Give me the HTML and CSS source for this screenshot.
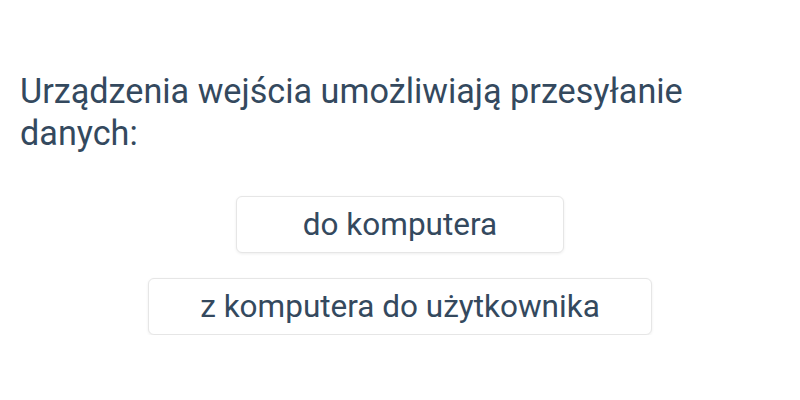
FILE: index.html
```html
<!DOCTYPE html>
<html lang="pl">
<head>
    <meta charset="UTF-8">
    <title>Pytanie</title>
    <link rel="stylesheet" href="styles.css">
</head>
<body>

<div class="question">
    <p class="prompt">Urządzenia wejścia umożliwiają przesyłanie danych:</p>
    <div class="answers">
        <button class="answer answer-short">do komputera</button>
        <button class="answer">z komputera do użytkownika</button>
    </div>
</div>

</body>
</html>
```
FILE: styles.css
```css
body {
    font-family: Roboto, "Noto Sans", Arial, sans-serif;
    margin: 0;
    padding: 0;
    background-color: #fff;
    color: #34495e;
}

.question {
    padding: 70px 20px 0;
}

.prompt {
    font-size: 34.2px;
    line-height: 42px;
    margin: 0 0 42px;
    max-width: 700px;
}

.answers {
    display: flex;
    flex-direction: column;
    align-items: center;
    gap: 25px;
}

.answer {
    font-family: inherit;
    font-size: 31.5px;
    color: #34495e;
    background: #fff;
    border: 1px solid #e6e6e6;
    border-radius: 6px;
    box-shadow: 0 1px 3px rgba(0, 0, 0, 0.07);
    height: 57px;
    padding: 0 51px;
}

.answer-short {
    min-width: 328px;
}
```
